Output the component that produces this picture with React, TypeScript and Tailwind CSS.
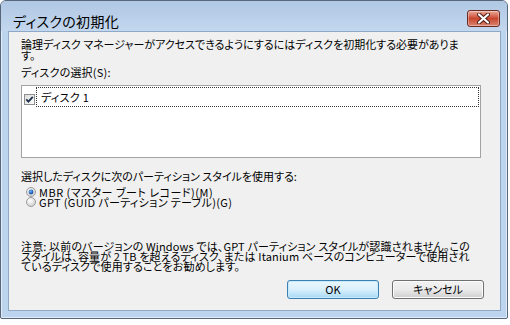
import React from "react";

const font = "font-['Noto_Sans_CJK_JP','Noto_Sans',sans-serif] [font-feature-settings:'palt']";

function CloseButton() {
  return (
    <div className="w-[33px] h-[17px] rounded-[3px] border border-[#6b2a22] bg-gradient-to-b from-[#e9a99a] via-[#c9452d] to-[#d8836e] flex items-center justify-center shadow-[inset_0_0_0_1px_rgba(255,255,255,0.35)]">
      <svg width="13" height="11" viewBox="0 0 13 11">
        <path d="M2 1.5 L11 9.5 M11 1.5 L2 9.5" stroke="#4a1a14" strokeWidth="4" strokeLinecap="round" />
        <path d="M2 1.5 L11 9.5 M11 1.5 L2 9.5" stroke="#ffffff" strokeWidth="2.2" strokeLinecap="round" />
      </svg>
    </div>
  );
}

function Checkbox() {
  return (
    <svg width="11" height="11" viewBox="0 0 11 11" className="shrink-0">
      <defs>
        <linearGradient id="cbg" x1="0" y1="0" x2="1" y2="1">
          <stop offset="0" stopColor="#dcdcdc" />
          <stop offset="1" stopColor="#ffffff" />
        </linearGradient>
      </defs>
      <rect x="0.5" y="0.5" width="10" height="10" fill="url(#cbg)" stroke="#8e8f8f" />
      <path d="M2.3 5.4 L4.4 7.6 L8.8 2.8" stroke="#1d2f4a" strokeWidth="1.8" fill="none" />
    </svg>
  );
}

function Radio({ checked }: { checked: boolean }) {
  return (
    <svg width="10" height="10" viewBox="0 0 10 10" className="shrink-0">
      <defs>
        <radialGradient id="rg1" cx="0.4" cy="0.35" r="0.6">
          <stop offset="0" stopColor="#ffffff" />
          <stop offset="1" stopColor="#d4d4d4" />
        </radialGradient>
        <radialGradient id="rg2" cx="0.4" cy="0.35" r="0.6">
          <stop offset="0" stopColor="#6fb5ff" />
          <stop offset="1" stopColor="#124a9c" />
        </radialGradient>
      </defs>
      <circle cx="5" cy="5" r="4.5" fill="url(#rg1)" stroke="#9c9c9c" strokeWidth="1" />
      {checked && <circle cx="5" cy="5" r="2.4" fill="url(#rg2)" />}
    </svg>
  );
}

export default function App() {
  return (
    <div className={`w-[510px] h-[325px] bg-white ${font} text-black`}>
      <div className="w-[508px] h-[319px] border border-[#56677a] rounded-t-[6px] rounded-b-[2px] bg-[#bdd4ee] shadow-[inset_0_0_0_1px_#e1ecf8] flex flex-col">
        <div className="h-[30px] shrink-0 rounded-t-[5px] bg-gradient-to-b from-[#b0c8e4] to-[#c3d7ee] flex items-start justify-between pl-[12px] pr-[7px] pt-[9px]">
          <span className="text-[14px] leading-[16px] mt-[3px] tracking-[0.3px]">ディスクの初期化</span>
          <CloseButton />
        </div>
        <div className="flex-1 ml-[7px] mr-[6px] mb-[7px] border border-[#8fa8c6] bg-[#f0f0f0] flex flex-col pl-[12px] pr-[16px] pt-[7px] text-[11px] leading-[10.5px]">
          <p className="whitespace-nowrap">
            論理ディスク マネージャーがアクセスできるようにするにはディスクを初期化する必要がありま
            <br />
            す。
          </p>
          <p className="mt-[6.5px] whitespace-nowrap tracking-[0.2px]">ディスクの選択(S):</p>
          <div className="mt-[8px] h-[73px] mr-[3px] border border-[#a3a3a3] bg-white flex flex-col pl-[2px] pr-[1px] pt-[1px]">
            <div className="flex items-center h-[20px]">
              <div className="mt-[4px]"><Checkbox /></div>
              <div className="ml-[1px] flex-1 h-[20px] border border-dotted border-[#333] flex items-center pl-[4px] pt-[1px] tracking-[0.3px]">
                ディスク 1
              </div>
            </div>
          </div>
          <p className="mt-[12.5px] whitespace-nowrap">選択したディスクに次のパーティション スタイルを使用する:</p>
          <div className="mt-[6px] flex flex-col pl-[5px]">
            <label className="flex items-center h-[10px] gap-[3px]">
              <Radio checked />
              <span className="tracking-[0.5px]">MBR (マスター ブート レコード)(M)</span>
            </label>
            <label className="flex items-center h-[10px] gap-[3px]">
              <Radio checked={false} />
              <span className="tracking-[0.35px]">GPT (GUID パーティション テーブル)(G)</span>
            </label>
          </div>
          <p className="mt-[34px] whitespace-nowrap leading-[10px] tracking-[0.15px]">
            注意: 以前のバージョンの Windows では、GPT パーティション スタイルが認識されません。この
            <br />
            スタイルは、容量が 2 TB を超えるディスク、または Itanium ベースのコンピューターで使用され
            <br />
            ているディスクで使用することをお勧めします。
          </p>
          <div className="mt-[9px] flex justify-end gap-[13px]">
            <button className="w-[92px] h-[19px] rounded-[3px] border border-[#3c7fb1] bg-gradient-to-b from-[#eaf6fd] via-[#d9f0fc] to-[#a7d9f5] shadow-[inset_0_0_0_1px_#c6e9fc] text-[11px] leading-[17px]">
              OK
            </button>
            <button className="w-[92px] h-[19px] rounded-[3px] border border-[#707070] bg-gradient-to-b from-[#f2f2f2] via-[#ebebeb] to-[#cfcfcf] shadow-[inset_0_0_0_1px_#fcfcfc] text-[11px] leading-[17px]">
              キャンセル
            </button>
          </div>
        </div>
      </div>
    </div>
  );
}
